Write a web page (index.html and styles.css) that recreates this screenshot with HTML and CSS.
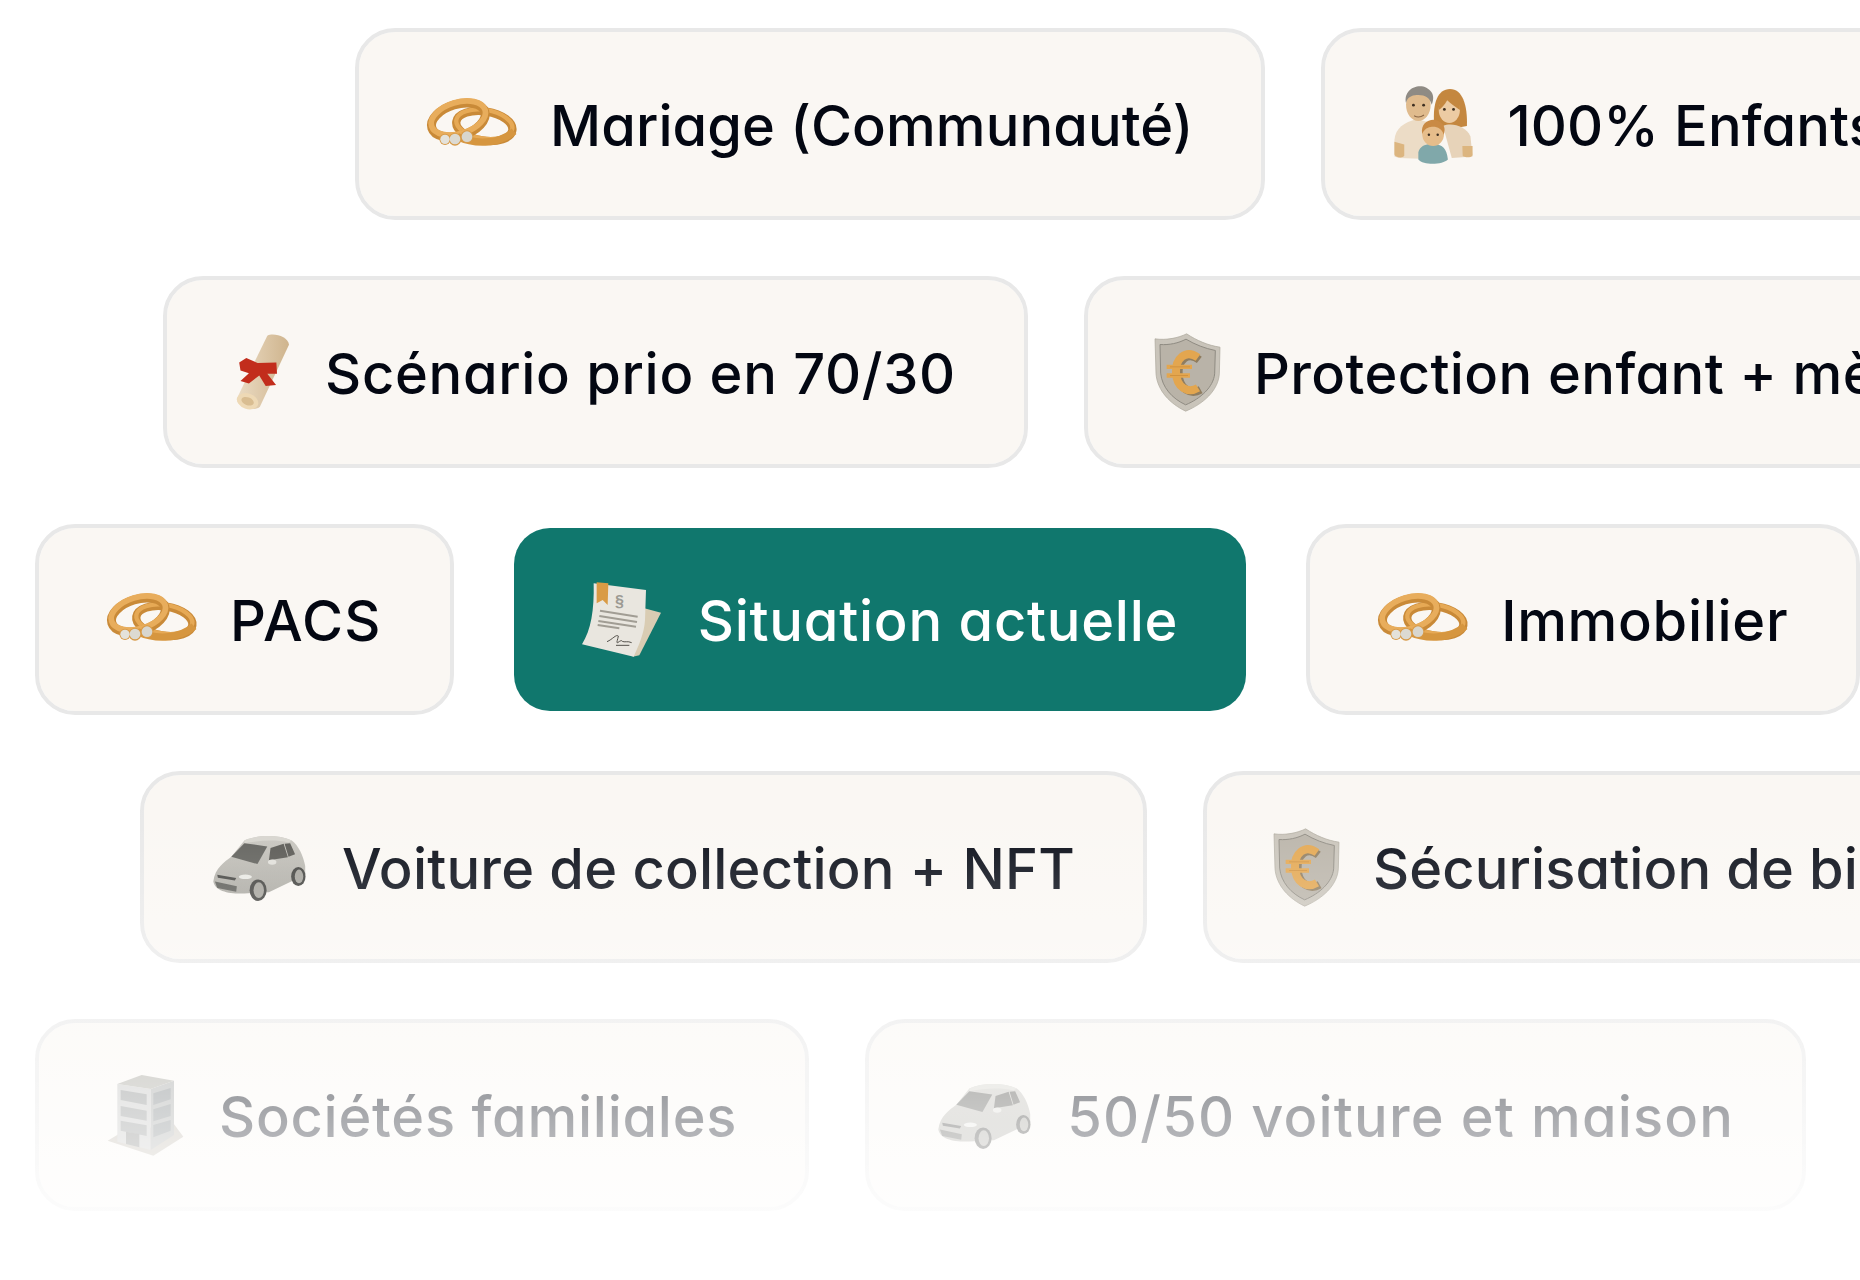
FILE: index.html
```html
<!DOCTYPE html>
<html lang="fr">
<head>
<meta charset="utf-8">
<title>Scénarios</title>
<link rel="stylesheet" href="styles.css">
</head>
<body>
<svg class="defs" aria-hidden="true">
  <defs>
    <linearGradient id="roll" x1="0" y1="0" x2="1" y2="0"><stop offset="0" stop-color="#ebdcc4"/><stop offset="1" stop-color="#cfb48d"/></linearGradient>
    <linearGradient id="body" x1="0" y1="0" x2="0" y2="1"><stop offset="0" stop-color="#c9c7c0"/><stop offset="1" stop-color="#a9a7a0"/></linearGradient>
    <g id="rings">
      <ellipse cx="433" cy="346" rx="85" ry="44" transform="rotate(9 433 346)" fill="none" stroke="#c98a38" stroke-width="25"/>
      <ellipse cx="433" cy="341" rx="85" ry="43" transform="rotate(9 433 341)" fill="none" stroke="#e6a955" stroke-width="13"/>
      <ellipse cx="355" cy="328" rx="83" ry="47" transform="rotate(-17 355 328)" fill="none" stroke="#c98a38" stroke-width="27"/>
      <ellipse cx="355" cy="322" rx="84" ry="47" transform="rotate(-17 355 322)" fill="none" stroke="#e8ad5c" stroke-width="17"/>
      <path d="M352 378 C400 400 475 404 522 362" fill="none" stroke="#d6963f" stroke-width="22"/>
      <circle cx="315" cy="386" r="17" fill="#d79a48"/><circle cx="345" cy="386" r="19" fill="#d79a48"/><circle cx="381" cy="378" r="19" fill="#d79a48"/>
      <circle cx="315" cy="386" r="14" fill="#e4e2da"/><circle cx="345" cy="385" r="16" fill="#dcdad2"/><circle cx="381" cy="378" r="16" fill="#d8d6ce"/>
    </g>
    <g id="shield">
      <path d="M350 220 C380 240 415 255 450 260 L448 340 C445 390 400 430 347 452 C300 430 262 390 258 340 L255 235 C290 240 325 232 350 220Z" fill="#c9c4ba" stroke="#a9a499" stroke-width="2"/>
      <path d="M348 236 C375 252 405 264 436 270 L434 340 C430 380 392 414 347 433 C306 414 276 380 272 338 L270 252 C298 254 325 248 348 236Z" fill="#b9b3a8" stroke="#8f8b82" stroke-width="3"/>
      <path d="M388 298 C352 270 324 300 326 340 C328 386 362 404 392 388" fill="none" stroke="#8f7d60" stroke-width="24"/>
      <path d="M384 291 C346 264 316 296 318 336 C320 382 354 400 384 382" fill="none" stroke="#e3a64f" stroke-width="24"/>
      <path d="M290 319 H366 M290 345 H360" fill="none" stroke="#e3a64f" stroke-width="13"/>
      <path d="M300 319 H360 M300 345 H354" fill="none" stroke="#c98a38" stroke-width="2"/>
    </g>
    <g id="car">
      <path d="M250 365 C255 325 285 305 305 290 L345 240 C385 222 450 222 490 240 C510 255 525 285 531 318 L531 345 L420 398 L345 402 C300 404 255 395 250 365Z" fill="url(#body)"/>
      <path d="M345 240 C385 222 450 222 490 240 L480 246 C440 236 390 240 345 248Z" fill="#d6d4cd"/>
      <path d="M345 248 L415 258 L385 312 L305 290Z" fill="#5d5d58"/>
      <path d="M425 263 L465 250 L478 291 L420 300Z M468 250 L485 248 L500 282 L480 290Z" fill="#55544f"/>
      <path d="M262 345 L320 355 L316 362 L264 354Z" fill="#3f3f3c"/>
      <path d="M255 365 L322 380 L320 397 L262 385Z" fill="#5a5a55"/>
      <ellipse cx="348" cy="351" rx="20" ry="7" fill="#e8e8e3"/>
      <ellipse cx="430" cy="306" rx="13" ry="8" fill="#e0dfd9"/>
      <ellipse cx="387" cy="392" rx="26" ry="33" fill="#3d3d3a"/><ellipse cx="389" cy="392" rx="16" ry="24" fill="#a3a19a"/>
      <ellipse cx="510" cy="350" rx="22" ry="29" fill="#3d3d3a"/><ellipse cx="512" cy="350" rx="13" ry="21" fill="#a3a19a"/>
    </g>
  </defs>
</svg>

<main class="board">
  <div class="row row-a">
    <div class="chip">
      <svg class="icon icon-rings" viewBox="261 220 291 240"><use href="#rings"/></svg>
      <span class="label sp-a">Mariage (Communauté)</span>
    </div>
    <div class="chip">
      <svg class="icon icon-family" viewBox="258 226 250 227">
        <path d="M262 432 L262 385 C265 350 290 335 325 325 L380 340 L395 440 L275 436Z" fill="#ecdcc6"/>
        <path d="M262 390 L262 425 C262 435 285 438 290 430 L290 398Z" fill="#dcb57f"/>
        <ellipse cx="330" cy="285" rx="35" ry="46" fill="#e0bb8d"/>
        <path d="M295 280 C285 235 345 215 368 250 C375 262 372 275 368 285 C362 262 345 255 320 258 C305 260 298 268 295 280Z" fill="#8f8b84"/>
        <circle cx="316" cy="286" r="4" fill="#3d2f22"/><circle cx="345" cy="286" r="4" fill="#3d2f22"/>
        <path d="M318 316 Q332 324 346 314" fill="none" stroke="#8a6644" stroke-width="3"/>
        <path d="M375 340 C370 280 385 240 420 240 C455 240 470 285 468 345 L440 350 L395 345Z" fill="#c4873f"/>
        <path d="M400 345 C425 335 465 345 478 375 L484 432 L425 436Z" fill="#e7d3b9"/>
        <ellipse cx="418" cy="300" rx="30" ry="37" fill="#eccba3"/>
        <path d="M388 300 C388 265 410 255 425 258 C442 262 450 285 448 300 C435 290 420 280 412 272 C405 285 395 295 388 300Z" fill="#c4873f"/>
        <circle cx="404" cy="298" r="4" fill="#3d2f22"/><circle cx="430" cy="298" r="4" fill="#3d2f22"/>
        <path d="M455 402 L484 402 L484 428 C480 436 462 436 456 430Z" fill="#dcb57f"/>
        <path d="M330 420 C335 400 355 395 372 398 C395 396 410 405 414 440 C400 455 345 458 330 440Z" fill="#80a8aa"/>
        <ellipse cx="372" cy="368" rx="31" ry="34" fill="#e6bd8b"/>
        <path d="M341 368 C335 335 365 322 385 330 C405 338 408 355 402 370 C398 352 380 345 365 348 C352 350 345 358 341 368Z" fill="#c98a45"/>
        <circle cx="360" cy="370" r="3.5" fill="#3d2f22"/><circle cx="385" cy="370" r="3.5" fill="#3d2f22"/>
      </svg>
      <span class="label sp-a">100% Enfants</span>
    </div>
  </div>

  <div class="row row-b">
    <div class="chip">
      <svg class="icon icon-scroll" viewBox="255 214.5 198 240">
        <path d="M355 222 C375 212 420 225 422 250 L332 442 C315 458 265 445 260 418Z" fill="url(#roll)"/>
        <ellipse cx="294" cy="425" rx="34" ry="24" transform="rotate(20 294 425)" fill="#eed9b5"/>
        <ellipse cx="294" cy="425" rx="20" ry="12" transform="rotate(20 294 425)" fill="#d9bd91"/>
        <path d="M268 305 L290 291 L325 307 L383 305 L385 340 L355 340 L382 375 L350 378 L330 345 L298 370 L272 362 L298 338 L272 330Z" fill="#c22d1c"/>
      </svg>
      <span class="label sp-c">Scénario prio en 70/30</span>
    </div>
    <div class="chip">
      <svg class="icon icon-shield" viewBox="258 214.5 216 240"><use href="#shield"/></svg>
      <span class="label sp-b">Protection enfant + mère</span>
    </div>
  </div>

  <div class="row row-c">
    <div class="chip">
      <svg class="icon icon-rings" viewBox="261 220 291 240"><use href="#rings"/></svg>
      <span class="label sp-f">PACS</span>
    </div>
    <div class="chip chip-active">
      <svg class="icon icon-doc" viewBox="243 207 270 240">
        <path d="M430 295 L480 308 L415 436 L395 440Z" fill="#d9ccb3"/>
        <path d="M278 220 L435 240 L432 330 C430 370 412 410 398 440 L243 403 C270 360 280 300 278 220Z" fill="#e9e6df"/>
        <path d="M287 217 L322 220 L320 285 L305 270 L287 280Z" fill="#d99b45"/>
        <text class="doc-mark" x="355" y="292">§</text>
        <path d="M297 302 L410 320 M295 318 L408 336 M292 333 L405 350 M290 345 L355 355" fill="none" stroke="#a19d94" stroke-width="6"/>
        <path d="M318 395 C335 388 345 372 352 378 C350 390 345 400 350 398 C358 392 362 390 364 394 C370 398 380 392 392 398 M345 406 L385 406" fill="none" stroke="#55524c" stroke-width="3"/>
      </svg>
      <span class="label sp-d">Situation actuelle</span>
    </div>
    <div class="chip">
      <svg class="icon icon-rings" viewBox="261 220 291 240"><use href="#rings"/></svg>
      <span class="label sp-c">Immobilier</span>
    </div>
  </div>

  <div class="row row-d">
    <div class="chip">
      <svg class="icon icon-car" viewBox="246 201 318 240"><use href="#car"/></svg>
      <span class="label sp-v">Voiture de collection + NFT</span>
    </div>
    <div class="chip">
      <svg class="icon icon-shield" viewBox="258 214.5 216 240"><use href="#shield"/></svg>
      <span class="label sp-a">Sécurisation de biens</span>
    </div>
  </div>

  <div class="row row-a2">
    <div class="chip">
      <svg class="icon icon-building" viewBox="261 195 258 240">
        <path d="M263 392 L300 370 L460 340 L490 380 L400 437Z" fill="#bdb6aa"/>
        <path d="M292 222 L392 237 L392 420 L292 395Z" fill="#c4c4c2"/>
        <path d="M392 237 L462 212 L462 375 L392 420Z" fill="#a5a7a5"/>
        <path d="M292 222 L365 195 L462 212 L392 237Z" fill="#a9a89f"/>
        <path d="M302 240 L380 253 L380 285 L302 270Z M302 288 L380 302 L380 332 L302 318Z M302 332 L380 346 L380 378 L302 362Z" fill="#8a8d8c"/>
        <path d="M400 250 L452 234 L452 268 L400 285Z M400 298 L452 282 L452 318 L400 334Z M400 345 L452 330 L452 362 L400 382Z" fill="#7c8284"/>
        <path d="M318 365 L358 372 L358 412 L318 402Z" fill="#7b7c79"/>
      </svg>
      <span class="label sp-d">Sociétés familiales</span>
    </div>
    <div class="chip">
      <svg class="icon icon-car" viewBox="246 201 318 240"><use href="#car"/></svg>
      <span class="label sp-e">50/50 voiture et maison</span>
    </div>
  </div>
</main>
<div class="fade"></div>
</body>
</html>
```

FILE: styles.css
```css
* { box-sizing: border-box; }

html, body {
  margin: 0;
  height: 1280px;
  overflow: hidden;
  background: #fff;
}

body {
  position: relative;
  font-family: Inter, "Noto Sans", sans-serif;
  font-feature-settings: "cv11" 1;
  color: #030712;
}

.defs {
  position: absolute;
  width: 0;
  height: 0;
}

.board {
  display: flex;
  flex-direction: column;
  gap: 56px;
  padding-top: 28px;
}

.row {
  display: flex;
  gap: 56px;
  height: 191.75px;
}

.row-a { padding-left: 355px; }
.row-b { padding-left: 163px; }
.row-c { padding-left: 35px; }
.row-d { padding-left: 140px; }
.row-a2 { padding-left: 35px; }

.chip {
  flex: none;
  display: flex;
  align-items: center;
  gap: 26px;
  padding: 0 68px;
  border: 4px solid #e8e8e8;
  border-radius: 40px;
  background: #faf7f3;
  background-clip: padding-box;
}

.chip-active {
  border-color: transparent;
  background-color: #10776d;
  color: #fff;
}

.icon {
  flex: none;
  height: 80px;
  overflow: visible;
}

.icon-rings { width: 97px; }
.icon-family { width: 88px; }
.icon-scroll { width: 64px; }
.icon-shield { width: 72px; }
.icon-doc { width: 90px; }
.icon-car { width: 104px; }
.icon-building { width: 86px; }

.doc-mark {
  font-family: "Liberation Sans", sans-serif;
  font-size: 48px;
  font-weight: 700;
  fill: #9c9a93;
  text-anchor: middle;
}

.label {
  padding-top: 5px;
  font-size: 56px;
  line-height: 1.2;
  font-weight: 450;
  white-space: nowrap;
}

/* Tracking steps: the reference face runs a little wider than Inter */
.sp-a { letter-spacing: 0.1px; }
.sp-v { letter-spacing: 0.2px; }
.sp-b { letter-spacing: 0.4px; }
.sp-c { letter-spacing: 0.7px; }
.sp-d { letter-spacing: 0.75px; }
.sp-e { letter-spacing: 1.15px; }
.sp-f { letter-spacing: 1.3px; }

.fade {
  position: absolute;
  inset: 0;
  pointer-events: none;
  background: linear-gradient(to bottom, rgba(255, 255, 255, 0) 800px, #fff 1280px);
}
```
